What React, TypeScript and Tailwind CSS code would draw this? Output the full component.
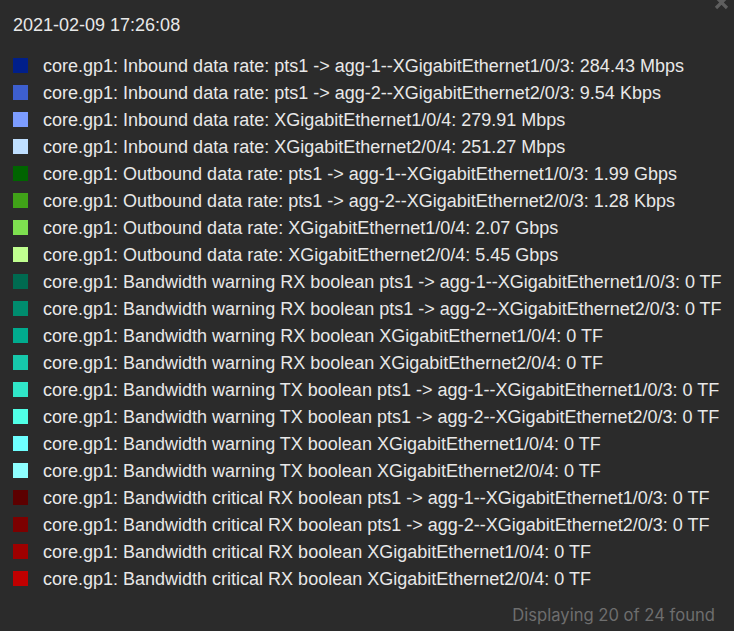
import React from "react";

const rows: [string, string][] = [
  ["#001f8a", "core.gp1: Inbound data rate: pts1 -> agg-1--XGigabitEthernet1/0/3: 284.43 Mbps"],
  ["#3d5fcf", "core.gp1: Inbound data rate: pts1 -> agg-2--XGigabitEthernet2/0/3: 9.54 Kbps"],
  ["#7c9cff", "core.gp1: Inbound data rate: XGigabitEthernet1/0/4: 279.91 Mbps"],
  ["#bfdfff", "core.gp1: Inbound data rate: XGigabitEthernet2/0/4: 251.27 Mbps"],
  ["#006400", "core.gp1: Outbound data rate: pts1 -> agg-1--XGigabitEthernet1/0/3: 1.99 Gbps"],
  ["#40a218", "core.gp1: Outbound data rate: pts1 -> agg-2--XGigabitEthernet2/0/3: 1.28 Kbps"],
  ["#7ee050", "core.gp1: Outbound data rate: XGigabitEthernet1/0/4: 2.07 Gbps"],
  ["#c0ff90", "core.gp1: Outbound data rate: XGigabitEthernet2/0/4: 5.45 Gbps"],
  ["#006a50", "core.gp1: Bandwidth warning RX boolean pts1 -> agg-1--XGigabitEthernet1/0/3: 0 TF"],
  ["#008c6e", "core.gp1: Bandwidth warning RX boolean pts1 -> agg-2--XGigabitEthernet2/0/3: 0 TF"],
  ["#00ab8e", "core.gp1: Bandwidth warning RX boolean XGigabitEthernet1/0/4: 0 TF"],
  ["#16c8ab", "core.gp1: Bandwidth warning RX boolean XGigabitEthernet2/0/4: 0 TF"],
  ["#30e6c8", "core.gp1: Bandwidth warning TX boolean pts1 -> agg-1--XGigabitEthernet1/0/3: 0 TF"],
  ["#50ffe6", "core.gp1: Bandwidth warning TX boolean pts1 -> agg-2--XGigabitEthernet2/0/3: 0 TF"],
  ["#6effff", "core.gp1: Bandwidth warning TX boolean XGigabitEthernet1/0/4: 0 TF"],
  ["#8effff", "core.gp1: Bandwidth warning TX boolean XGigabitEthernet2/0/4: 0 TF"],
  ["#5c0000", "core.gp1: Bandwidth critical RX boolean pts1 -> agg-1--XGigabitEthernet1/0/3: 0 TF"],
  ["#7c0000", "core.gp1: Bandwidth critical RX boolean pts1 -> agg-2--XGigabitEthernet2/0/3: 0 TF"],
  ["#9e0000", "core.gp1: Bandwidth critical RX boolean XGigabitEthernet1/0/4: 0 TF"],
  ["#c00000", "core.gp1: Bandwidth critical RX boolean XGigabitEthernet2/0/4: 0 TF"],
];

export default function App() {
  return (
    <div className="relative w-[734px] h-[631px] overflow-hidden bg-[#2b2b2b] text-[#e8e8e8] font-['Liberation_Sans',Arial,sans-serif]">
      <svg className="absolute left-[714px] top-[-5px]" width="15" height="15" viewBox="0 0 15 15">
        <path d="M2 2 L13 13 M13 2 L2 13" stroke="#5e5e5e" strokeWidth="3.2" strokeLinecap="butt" />
      </svg>
      <div className="pl-[13px] pt-[14px] text-[18px] leading-[22px]">2021-02-09 17:26:08</div>
      <div className="mt-[16px] flex flex-col pl-[13px]">
        {rows.map(([c, t], i) => (
          <div key={i} className="flex items-center h-[27px] whitespace-nowrap">
            <div className="w-[15px] h-[15px] shrink-0" style={{ backgroundColor: c }} />
            <span className="ml-[15px] text-[18px] leading-[20px]">{t}</span>
          </div>
        ))}
      </div>
      <div className="flex justify-end pr-[19px] pt-[13px] text-[16.6px] leading-[20px] text-[#6e6e6e] font-['Inter',sans-serif]">
        Displaying 20 of 24 found
      </div>
    </div>
  );
}
